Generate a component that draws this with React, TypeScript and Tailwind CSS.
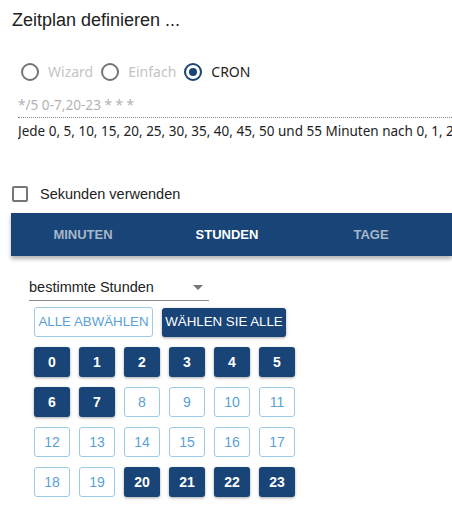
import React from 'react';

const hours = Array.from({ length: 24 }, (_, i) => i);
const selected = new Set([0, 1, 2, 3, 4, 5, 6, 7, 20, 21, 22, 23]);

const Radio = ({ checked, label }: { checked?: boolean; label: string }) => (
  <label className="flex items-center gap-[9px]">
    <span
      className={`flex h-[18px] w-[18px] items-center justify-center rounded-full border-2 ${
        checked ? 'border-[#184477]' : 'border-[#757575]'
      }`}
    >
      {checked && <span className="h-[8px] w-[8px] rounded-full bg-[#184477]" />}
    </span>
    <span className={checked ? 'text-[#222]' : 'text-[#c4c4c4]'}>{label}</span>
  </label>
);

export default function App() {
  return (
    <div className="h-[517px] w-[452px] overflow-hidden bg-white font-['Liberation_Sans',Arial,sans-serif]">
      <h2 className="pl-[12px] pt-[9px] text-[18px] leading-[22px] text-[#212121]">Zeitplan definieren ...</h2>

      <div className="mt-[31px] flex gap-[8px] pl-[21px] font-['Noto_Sans',sans-serif] text-[14px] leading-[20px]">
        <Radio label="Wizard" />
        <Radio label="Einfach" />
        <Radio checked label="CRON" />
      </div>

      <div className="ml-[18px] mt-[14px] border-b border-dotted border-[#8a8a8a] pb-[3px] font-['Noto_Sans',sans-serif] text-[13.6px] leading-[18px] text-[#b3b3b3]">
        */5 0-7,20-23 * * *
      </div>
      <div className="ml-[18px] mt-[4px] overflow-hidden whitespace-nowrap font-['Noto_Sans',sans-serif] text-[13.5px] leading-[18px] text-[#222]">
        Jede 0, 5, 10, 15, 20, 25, 30, 35, 40, 45, 50 und 55 Minuten nach 0, 1, 2
      </div>

      <label className="ml-[12px] mt-[45px] flex items-center gap-[12px] text-[14.5px] leading-[18px] text-[#222]">
        <span className="h-[16px] w-[16px] rounded-[2px] border-2 border-[#757575]" />
        Sekunden verwenden
      </label>

      <div className="ml-[11px] mt-[10px] flex h-[43px] bg-[#184477] text-[13px] font-bold shadow-[0_3px_4px_rgba(0,0,0,0.3)]">
        <div className="flex w-[144px] items-center justify-center text-[#a7b6c9]">MINUTEN</div>
        <div className="flex w-[144px] items-center justify-center text-white">STUNDEN</div>
        <div className="flex w-[144px] items-center justify-center text-[#a7b6c9]">TAGE</div>
      </div>

      <div className="ml-[29px] mt-[22px] flex w-[180px] items-center justify-between border-b border-[#8a8a8a] pb-[4px] text-[14.5px] leading-[18px] text-[#222]">
        <span>bestimmte Stunden</span>
        <span className="mr-[6px] h-0 w-0 border-x-[5px] border-t-[5px] border-x-transparent border-t-[#777]" />
      </div>

      <div className="ml-[34px] mt-[6px] flex items-center gap-[9px] text-[13.3px]">
        <button className="h-[30px] w-[119px] rounded-[3px] border border-[#9ccbe6] text-[#5a9fd6]">ALLE ABWÄHLEN</button>
        <button className="h-[29px] w-[124px] rounded-[3px] bg-[#184477] text-white shadow-[0_1px_3px_rgba(0,0,0,0.35)]">
          WÄHLEN SIE ALLE
        </button>
      </div>

      <div className="ml-[34px] mt-[10px] grid w-[261px] grid-cols-[repeat(6,36px)] gap-x-[9px] gap-y-[10px] text-[14px]">
        {hours.map(h =>
          selected.has(h) ? (
            <button
              key={h}
              className="h-[30px] rounded-[3px] bg-[#184477] font-bold text-white shadow-[0_1px_3px_rgba(0,0,0,0.35)]"
            >
              {h}
            </button>
          ) : (
            <button key={h} className="h-[30px] rounded-[3px] border border-[#9ccbe6] text-[#5a9fd6]">
              {h}
            </button>
          )
        )}
      </div>
    </div>
  );
}
